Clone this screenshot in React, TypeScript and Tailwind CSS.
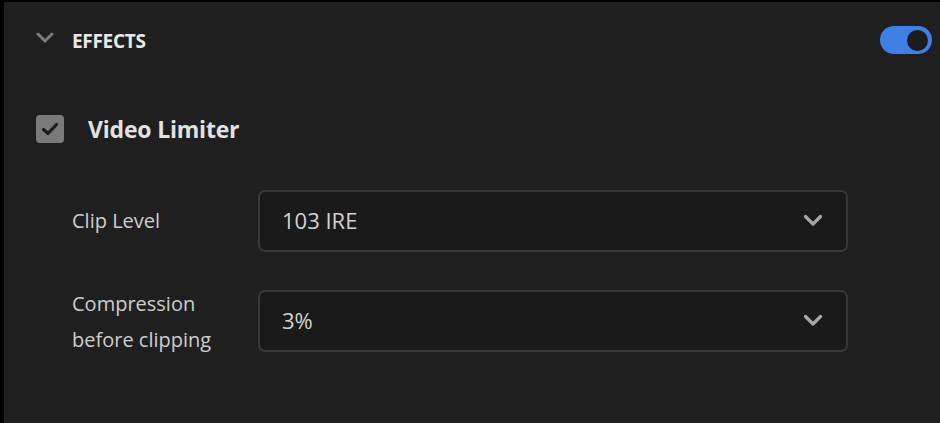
import { useState } from 'react'

function Chevron({ className }: { className?: string }) {
  return (
    <svg width="20" height="13" viewBox="0 0 20 13" fill="none" className={className}>
      <path d="M2.5 2.5 L10 10 L17.5 2.5" stroke="currentColor" strokeWidth="3.2" strokeLinecap="round" strokeLinejoin="round" />
    </svg>
  )
}

function SelectBox({ value }: { value: string }) {
  return (
    <div className="flex h-[62px] w-[590px] items-center justify-between rounded-[7px] border-2 border-[#383838] bg-[#1a1a1a] pl-[22px] pr-[23px]">
      <span className="text-[22px] text-[#d2d2d2]">{value}</span>
      <Chevron className="text-[#a6a6a6]" />
    </div>
  )
}

export default function App() {
  const [enabled, setEnabled] = useState(true)

  return (
    <div className="h-[423px] w-[940px] overflow-hidden bg-black pl-[4px] pt-[2px]" style={{ fontFamily: '"Open Sans", "Noto Sans", sans-serif' }}>
      <div className="h-full bg-[#1f1f1f] pt-[24px]">
        {/* Header */}
        <div className="flex h-[28px] items-center pl-[32px] pr-[8px]">
          <svg width="18" height="12" viewBox="0 0 18 12" fill="none" className="mb-[5px] text-[#7c7c7c]">
            <path d="M2 2 L9 9 L16 2" stroke="currentColor" strokeWidth="3" strokeLinecap="round" strokeLinejoin="round" />
          </svg>
          <span className="ml-[18px] mt-[2px] text-[19px] font-bold tracking-[-0.3px] text-[#e8e8e8]">EFFECTS</span>
          <button
            onClick={() => setEnabled(!enabled)}
            className={`ml-auto flex h-[28px] w-[52px] items-center rounded-full px-[4px] ${enabled ? 'justify-end bg-[#3f80e4]' : 'justify-start bg-[#555]'}`}
          >
            <span className="h-[21px] w-[21px] rounded-full bg-[#1c1c1c]" />
          </button>
        </div>

        {/* Video Limiter */}
        <div className="mt-[58px] flex items-center pl-[32px]">
          <div className="flex h-[28px] w-[28px] items-center justify-center rounded-[4px] bg-[#7a7a7a]">
            <svg width="20" height="16" viewBox="0 0 20 16" fill="none">
              <path d="M3.5 8.5 L8 12.5 L16.5 3.5" stroke="#1c1c1c" strokeWidth="3.2" strokeLinecap="round" strokeLinejoin="round" />
            </svg>
          </div>
          <span className="ml-[24px] text-[23px] font-bold tracking-[-0.2px] text-[#e2e2e2]">Video Limiter</span>
        </div>

        {/* Fields */}
        <div className="mt-[43px] flex flex-col gap-[38px] pl-[68px]">
          <div className="flex items-center">
            <div className="w-[186px] text-[20px] text-[#cdcdcd]">Clip Level</div>
            <SelectBox value="103 IRE" />
          </div>
          <div className="flex items-start">
            <div className="-mt-[4px] w-[186px] text-[20px] leading-[36px] text-[#cdcdcd]">
              Compression
              <br />
              before clipping
            </div>
            <SelectBox value="3%" />
          </div>
        </div>
      </div>
    </div>
  )
}
